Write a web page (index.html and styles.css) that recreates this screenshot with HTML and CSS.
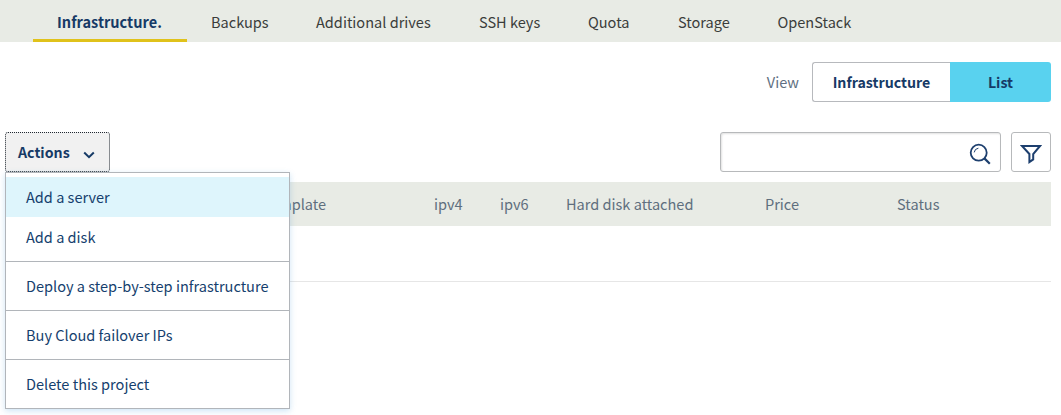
FILE: index.html
```html
<!DOCTYPE html>
<html lang="en">
<head>
<meta charset="utf-8">
<title>Infrastructure</title>
<link rel="stylesheet" href="styles.css">
</head>
<body>
<nav class="tabs">
  <a class="tab tab-active">Infrastructure.</a>
  <a class="tab">Backups</a>
  <a class="tab">Additional drives</a>
  <a class="tab">SSH keys</a>
  <a class="tab">Quota</a>
  <a class="tab">Storage</a>
  <a class="tab">OpenStack</a>
</nav>
<main class="content">
  <div class="view-row">
    <span class="view-label">View</span>
    <div class="switch">
      <button class="switch-btn">Infrastructure</button>
      <button class="switch-btn switch-on">List</button>
    </div>
  </div>
  <div class="toolbar">
    <div class="dropdown">
      <button class="actions"><span>Actions</span>
        <svg class="chevron" width="12" height="8" viewBox="0 0 12 8"><path d="M1.2 1.5 6 6.2 10.8 1.5" fill="none" stroke="#163a66" stroke-width="2"/></svg>
      </button>
      <div class="menu">
        <div class="group group-first">
          <a class="item item-hover">Add a server</a>
          <a class="item">Add a disk</a>
        </div>
        <div class="group"><a class="item">Deploy a step-by-step infrastructure</a></div>
        <div class="group"><a class="item">Buy Cloud failover IPs</a></div>
        <div class="group"><a class="item">Delete this project</a></div>
      </div>
    </div>
    <div class="search">
      <svg width="22" height="22" viewBox="0 0 22 22" fill="none" stroke="#1d3f6e"><circle cx="9.7" cy="9.7" r="8" stroke-width="1.8"/><path d="M15.4 15.4 20.8 20.8" stroke-width="2.2"/><path d="M5.2 9.4A4.8 4.8 0 0 1 9.4 5.2" stroke-width="1"/></svg>
    </div>
    <button class="filter">
      <svg width="22" height="20" viewBox="0 0 22 20"><path d="M2 2H20L13.2 10V15.4L9.4 18V10Z" fill="none" stroke="#1d3f6e" stroke-width="2"/></svg>
    </button>
  </div>
  <div class="table">
    <div class="thead">
      <span class="th">Template</span>
      <span class="th">ipv4</span>
      <span class="th">ipv6</span>
      <span class="th">Hard disk attached</span>
      <span class="th">Price</span>
      <span class="th">Status</span>
    </div>
    <div class="empty-row"></div>
  </div>
</main>
</body>
</html>
```
FILE: styles.css
```css
* { box-sizing: border-box; }
body {
  margin: 0;
  height: 415px;
  overflow: hidden;
  background: #fff;
  color: #163f6e;
  font: 14.56px/20px "Noto Sans CJK SC", "Open Sans", sans-serif;
}
button { font: inherit; color: inherit; margin: 0; padding: 0; background: #fff; }
.tabs {
  display: grid;
  grid-template-columns: 154px 105px 163px 109px 90px 99.5px 123px;
  height: 42px;
  padding-left: 33px;
  background: #e8ebe5;
  color: #3b3d3b;
}
.tab { padding: 12px 0 0 24px; white-space: nowrap; }
.tab-active { color: #163a66; font-weight: 700; border-bottom: 3px solid #e0c21b; }
.content { padding: 20px 10px 0 5px; }
.view-row { display: flex; justify-content: flex-end; align-items: center; height: 40px; }
.view-label { margin-right: 13px; color: #5f6f82; }
.switch { display: flex; width: 239px; height: 40px; }
.switch-btn {
  width: 138px;
  border: 1px solid #b7b9bd;
  border-right: 0;
  border-radius: 3px 0 0 3px;
  color: #163a66;
  font-size: 14.2px;
  font-weight: 700;
}
.switch-on { width: 101px; background: #59d2ef; border: 0; border-radius: 0 3px 3px 0; }
.toolbar { display: flex; height: 40px; margin-top: 30px; }
.dropdown { position: relative; width: 105px; margin-right: auto; }
.actions {
  display: flex;
  align-items: center;
  width: 105px;
  height: 40px;
  padding: 0 14px 0 12px;
  justify-content: space-between;
  background: #f1f1f1;
  border: 1px dotted #202830;
  border-radius: 3px;
  color: #163a66;
  font-size: 14.2px;
  font-weight: 700;
}
.chevron { margin-top: 5px; }
.menu {
  position: absolute;
  z-index: 2;
  top: 40px;
  left: 0;
  width: 285px;
  background: #fff;
  border: 1px solid #b1b5ba;
  box-shadow: 0 2px 6px rgba(30, 130, 210, .22);
}
.group { padding: 4px 0; border-top: 1px solid #b1b5ba; }
.group-first { border-top: 0; }
.item { display: block; height: 40px; padding: 10px 20px; white-space: nowrap; }
.item-hover { background: #def5fc; }
.search {
  display: flex;
  align-items: center;
  justify-content: flex-end;
  width: 281px;
  padding: 3px 9px 0 0;
  border: 1px solid #b7b9bb;
  border-radius: 3px;
  box-shadow: inset 1px 1px 2px rgba(0, 0, 0, .12);
}
.filter {
  display: flex;
  align-items: center;
  justify-content: center;
  width: 40px;
  margin-left: 10px;
  padding-top: 3px;
  border: 1px solid #b7b9bb;
  border-radius: 3px;
}
.table { margin-top: 10px; }
.thead {
  display: grid;
  grid-template-columns: 171.5px 66px 66px 199px 132px 1fr;
  height: 44px;
  padding: 12px 0 0 257.5px;
  background: #e8ebe5;
  color: #5f6f7e;
}
.empty-row { height: 56px; border-bottom: 1px solid #e6e6e6; }
```
